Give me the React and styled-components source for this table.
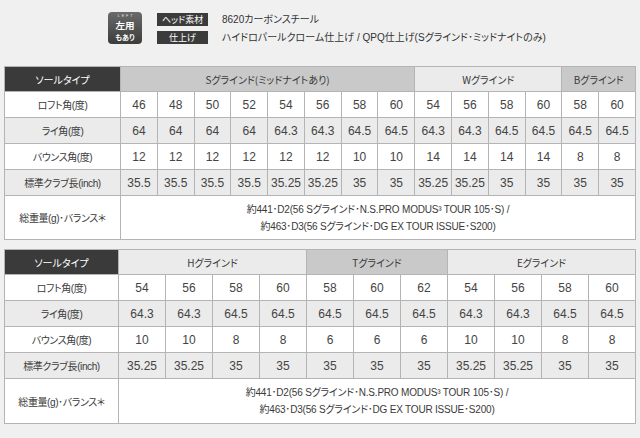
import React from 'react'
import styled, { createGlobalStyle } from 'styled-components'

const Global = createGlobalStyle`
  html, body {
    margin: 0;
    padding: 0;
    background: #f0f0f0;
  }
  body {
    font-family: "Liberation Sans", "Noto Sans CJK JP", sans-serif;
    font-feature-settings: "palt" 1;
    color: #3a3a3a;
  }
`

const Page = styled.div`
  width: 640px;
  height: 438px;
  padding: 11px 4px 0 4px;
  box-sizing: border-box;
  overflow: hidden;
`

const Info = styled.div`
  display: flex;
  align-items: flex-start;
  gap: 15px;
  margin-left: 104px;
  height: 55px;
`

const Badge = styled.div`
  width: 34px;
  height: 32px;
  margin-top: 1px;
  border-radius: 4px;
  background: linear-gradient(#6a6a6a, #3c3c3c);
  color: #fff;
  display: flex;
  flex-direction: column;
  align-items: center;
  justify-content: center;
`

const BadgeTiny = styled.span`
  font-size: 3.5px;
  line-height: 4px;
  letter-spacing: 2px;
  margin-left: 2px;
  opacity: 0.85;
`

const BadgeBig = styled.span`
  font-family: "Noto Sans CJK JP", sans-serif;
  font-size: 9.5px;
  line-height: 14px;
  font-weight: bold;
`

const BadgeSmall = styled.span`
  font-family: "Noto Sans CJK JP", sans-serif;
  font-size: 7px;
  line-height: 10px;
  font-weight: bold;
`

const Specs = styled.div`
  display: grid;
  grid-template-columns: 51px auto;
  column-gap: 14px;
  row-gap: 5px;
  margin-top: 2px;
`

const SpecLabel = styled.div`
  background: #3b3b3b;
  color: #fff;
  height: 13px;
  font-family: "Noto Sans CJK JP", sans-serif;
  font-size: 9px;
  line-height: 13px;
  text-align: center;
`

const SpecValue = styled.div`
  font-size: 10px;
  line-height: 13px;
  color: #333;
`

const Table = styled.table`
  width: 632px;
  border-collapse: collapse;
  table-layout: fixed;
  border: 1px solid #a8a8a8;
  margin-bottom: ${p => p.gap || 0}px;
`

const Head = styled.th`
  height: ${p => p.h || 24}px;
  padding: 0;
  font-weight: normal;
  font-family: "Noto Sans CJK JP", sans-serif;
  font-size: 10px;
  border: 1px solid #b4b4b4;
  color: ${p => (p.tone === 'dark' ? '#fff' : '#3a3a3a')};
  background: ${p =>
    p.tone === 'dark' ? '#3a3a3a' : p.tone === 'mid' ? '#c9c9c9' : '#ebebeb'};
`

const Label = styled.td`
  height: ${p => p.h || 25}px;
  padding: 0;
  text-align: center;
  font-size: 10px;
  letter-spacing: -0.4px;
  border: 1px solid #b4b4b4;
  background: ${p => (p.alt ? '#ebebeb' : '#fff')};
`

const Cell = styled.td`
  padding: 0;
  text-align: center;
  font-size: 12px;
  color: #444;
  border: 1px solid #b4b4b4;
  background: ${p => (p.alt ? '#ebebeb' : '#fff')};
  white-space: nowrap;
`

const Note = styled.td`
  padding: 0;
  text-align: center;
  font-size: 10px;
  letter-spacing: -0.2px;
  line-height: 17px;
  background: #fff;
  border: 1px solid #b4b4b4;
`

const rows1 = [
  ['ロフト角(度)', ['46', '48', '50', '52', '54', '56', '58', '60', '54', '56', '58', '60', '58', '60']],
  ['ライ角(度)', ['64', '64', '64', '64', '64.3', '64.3', '64.5', '64.5', '64.3', '64.3', '64.5', '64.5', '64.5', '64.5']],
  ['バウンス角(度)', ['12', '12', '12', '12', '12', '12', '10', '10', '14', '14', '14', '14', '8', '8']],
  ['標準クラブ長(inch)', ['35.5', '35.5', '35.5', '35.5', '35.25', '35.25', '35', '35', '35.25', '35.25', '35', '35', '35', '35']],
]

const rows2 = [
  ['ロフト角(度)', ['54', '56', '58', '60', '58', '60', '62', '54', '56', '58', '60']],
  ['ライ角(度)', ['64.3', '64.3', '64.5', '64.5', '64.5', '64.5', '64.5', '64.3', '64.3', '64.5', '64.5']],
  ['バウンス角(度)', ['10', '10', '8', '8', '6', '6', '6', '10', '10', '8', '8']],
  ['標準クラブ長(inch)', ['35.25', '35.25', '35', '35', '35', '35', '35', '35.25', '35.25', '35', '35']],
]

const SpecTable = ({ first, groups, rows, noteH, gap }) => {
  const count = rows[0][1].length
  return (
    <Table gap={gap}>
      <colgroup>
        <col style={{ width: first }} />
        {Array.from({ length: count }).map((_, i) => <col key={i} />)}
      </colgroup>
      <tbody>
        <tr>
          <Head tone="dark">ソールタイプ</Head>
          {groups.map(g => (
            <Head key={g.name} tone={g.tone} colSpan={g.span}>{g.name}</Head>
          ))}
        </tr>
        {rows.map(([label, values], r) => (
          <tr key={label}>
            <Label alt={r % 2 === 1}>{label}</Label>
            {values.map((v, i) => <Cell key={i} alt={r % 2 === 1}>{v}</Cell>)}
          </tr>
        ))}
        <tr>
          <Label h={noteH}>総重量(g)･バランス＊</Label>
          <Note colSpan={count}>
            約441･D2(56 Sグラインド･N.S.PRO MODUS³ TOUR 105･S) /<br />
            約463･D3(56 Sグラインド･DG EX TOUR ISSUE･S200)
          </Note>
        </tr>
      </tbody>
    </Table>
  )
}

const App = () => (
  <Page>
    <Global />
    <Info>
      <Badge>
        <BadgeTiny>LEFT</BadgeTiny>
        <BadgeBig>左用</BadgeBig>
        <BadgeSmall>もあり</BadgeSmall>
      </Badge>
      <Specs>
        <SpecLabel>ヘッド素材</SpecLabel>
        <SpecValue>8620カーボンスチール</SpecValue>
        <SpecLabel>仕上げ</SpecLabel>
        <SpecValue>ハイドロパールクローム仕上げ / QPQ仕上げ(Sグラインド･ミッドナイトのみ)</SpecValue>
      </Specs>
    </Info>
    <SpecTable
      first={116}
      gap={9}
      noteH={43}
      rows={rows1}
      groups={[
        { name: 'Sグラインド(ミッドナイトあり)', span: 8, tone: 'mid' },
        { name: 'Wグラインド', span: 4, tone: 'light' },
        { name: 'Bグラインド', span: 2, tone: 'mid' },
      ]}
    />
    <SpecTable
      first={114}
      noteH={44}
      rows={rows2}
      groups={[
        { name: 'Hグラインド', span: 4, tone: 'light' },
        { name: 'Tグラインド', span: 3, tone: 'mid' },
        { name: 'Eグラインド', span: 4, tone: 'light' },
      ]}
    />
  </Page>
)

export default App
